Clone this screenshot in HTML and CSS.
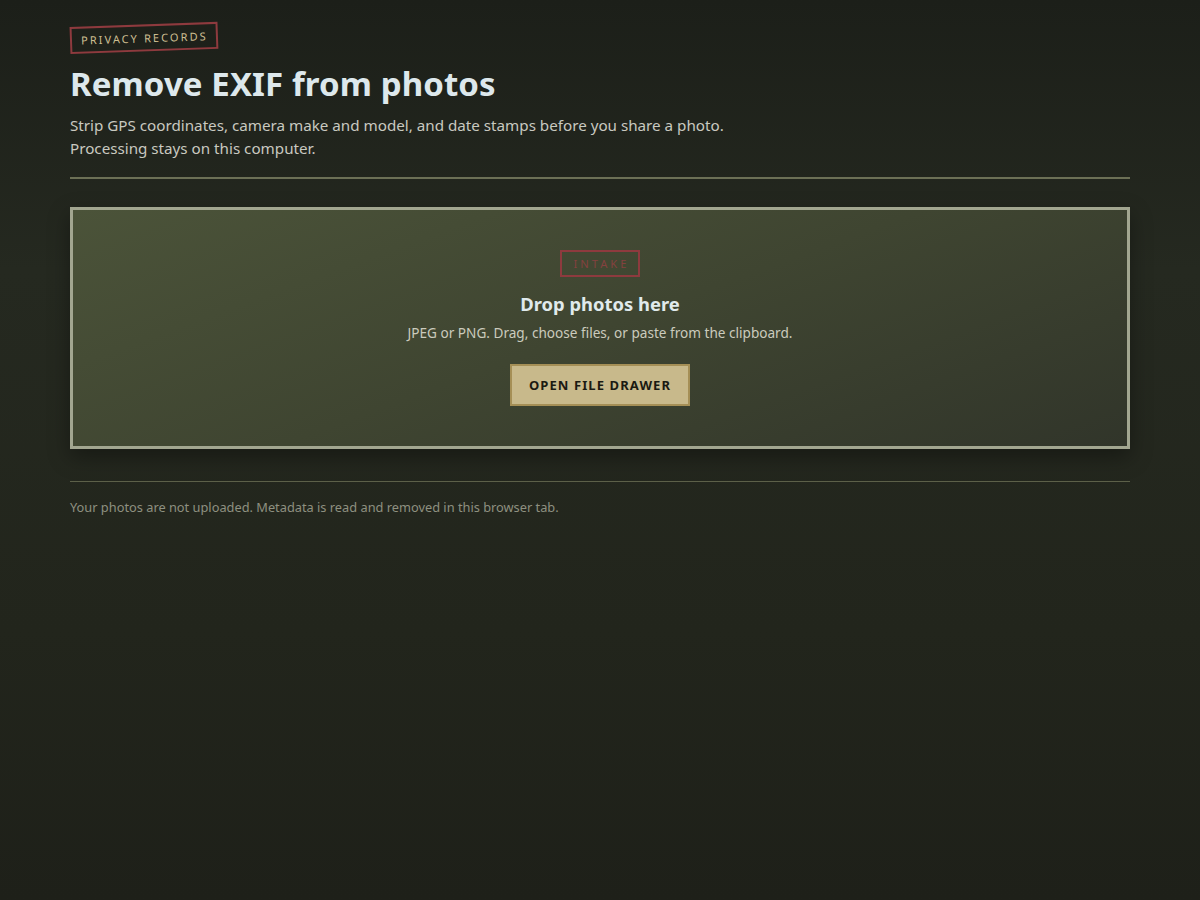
FILE: index.html
```html
<!DOCTYPE html>
<html lang="en">
<head>
<meta charset="utf-8">
<title>Remove EXIF from photos</title>
<link rel="stylesheet" href="styles.css">
</head>
<body>
<main class="page">
  <header class="head">
    <span class="stamp">PRIVACY RECORDS</span>
    <h1 class="title">Remove EXIF from photos</h1>
    <p class="lede">Strip GPS coordinates, camera make and model, and date stamps before you share a photo.<br>Processing stays on this computer.</p>
  </header>
  <section class="drop">
    <span class="intake">INTAKE</span>
    <h2 class="drop-title">Drop photos here</h2>
    <p class="drop-sub">JPEG or PNG. Drag, choose files, or paste from the clipboard.</p>
    <button class="btn" type="button">OPEN FILE DRAWER</button>
  </section>
  <footer class="foot">
    <p>Your photos are not uploaded. Metadata is read and removed in this browser tab.</p>
  </footer>
</main>
</body>
</html>
```
FILE: styles.css
```css
html, body {
  margin: 0;
  padding: 0;
  height: 100%;
}
body {
  background: linear-gradient(180deg, #1c1f19 0%, #252920 30%, #22251c 70%, #1e2019 100%);
  font-family: "Noto Sans", "Open Sans", sans-serif;
  color: #c8c8c0;
  min-height: 900px;
}
.page {
  width: 1060px;
  margin: 0 auto;
  padding-top: 25px;
}
.head {
  border-bottom: 2px solid #6c7056;
  padding-bottom: 17px;
}
.stamp {
  display: inline-block;
  border: 2px solid #8e3a3e;
  color: #cdbf92;
  font-size: 11px;
  letter-spacing: 2.1px;
  padding: 4px 8px 4px 9px;
  line-height: 15px;
  transform: rotate(-2deg);
  transform-origin: left center;
  margin-top: 2px;
}
.title {
  margin: 8px 0 0;
  font-size: 33px;
  line-height: 44px;
  font-weight: 700;
  color: #dde8ec;
  letter-spacing: 0.1px;
}
.lede {
  margin: 8px 0 0;
  font-size: 15.2px;
  line-height: 23px;
  color: #c9c9c0;
}
.drop {
  margin-top: 28px;
  border: 3px solid #a2a690;
  background: linear-gradient(160deg, #4b5339 0%, #3f4531 50%, #31352a 100%);
  box-shadow: 0 8px 20px rgba(0, 0, 0, 0.35);
  height: 242px;
  box-sizing: border-box;
  display: flex;
  flex-direction: column;
  align-items: center;
  padding-top: 40px;
}
.intake {
  border: 2px solid #8e3a3e;
  color: #84413f;
  font-size: 11.2px;
  letter-spacing: 3px;
  padding: 3px 8px 3px 11px;
  line-height: 17px;
}
.drop-title {
  margin: 14px 0 0;
  font-size: 18.4px;
  line-height: 26px;
  font-weight: 700;
  color: #e0eaec;
}
.drop-sub {
  margin: 6px 0 0;
  font-size: 13.6px;
  line-height: 20px;
  color: #cbcbbd;
}
.btn {
  margin-top: 21px;
  background: #c8b98b;
  border: 2px solid #a58f56;
  color: #1b1a12;
  font-family: "Noto Sans", "Open Sans", sans-serif;
  font-weight: 700;
  font-size: 13px;
  letter-spacing: 1.1px;
  padding: 0 17px;
  height: 42px;
  cursor: pointer;
}
.foot {
  margin-top: 32px;
  border-top: 1px solid #5c6049;
}
.foot p {
  margin: 15px 0 0;
  font-size: 12.8px;
  line-height: 20px;
  color: #8e9080;
}
```
